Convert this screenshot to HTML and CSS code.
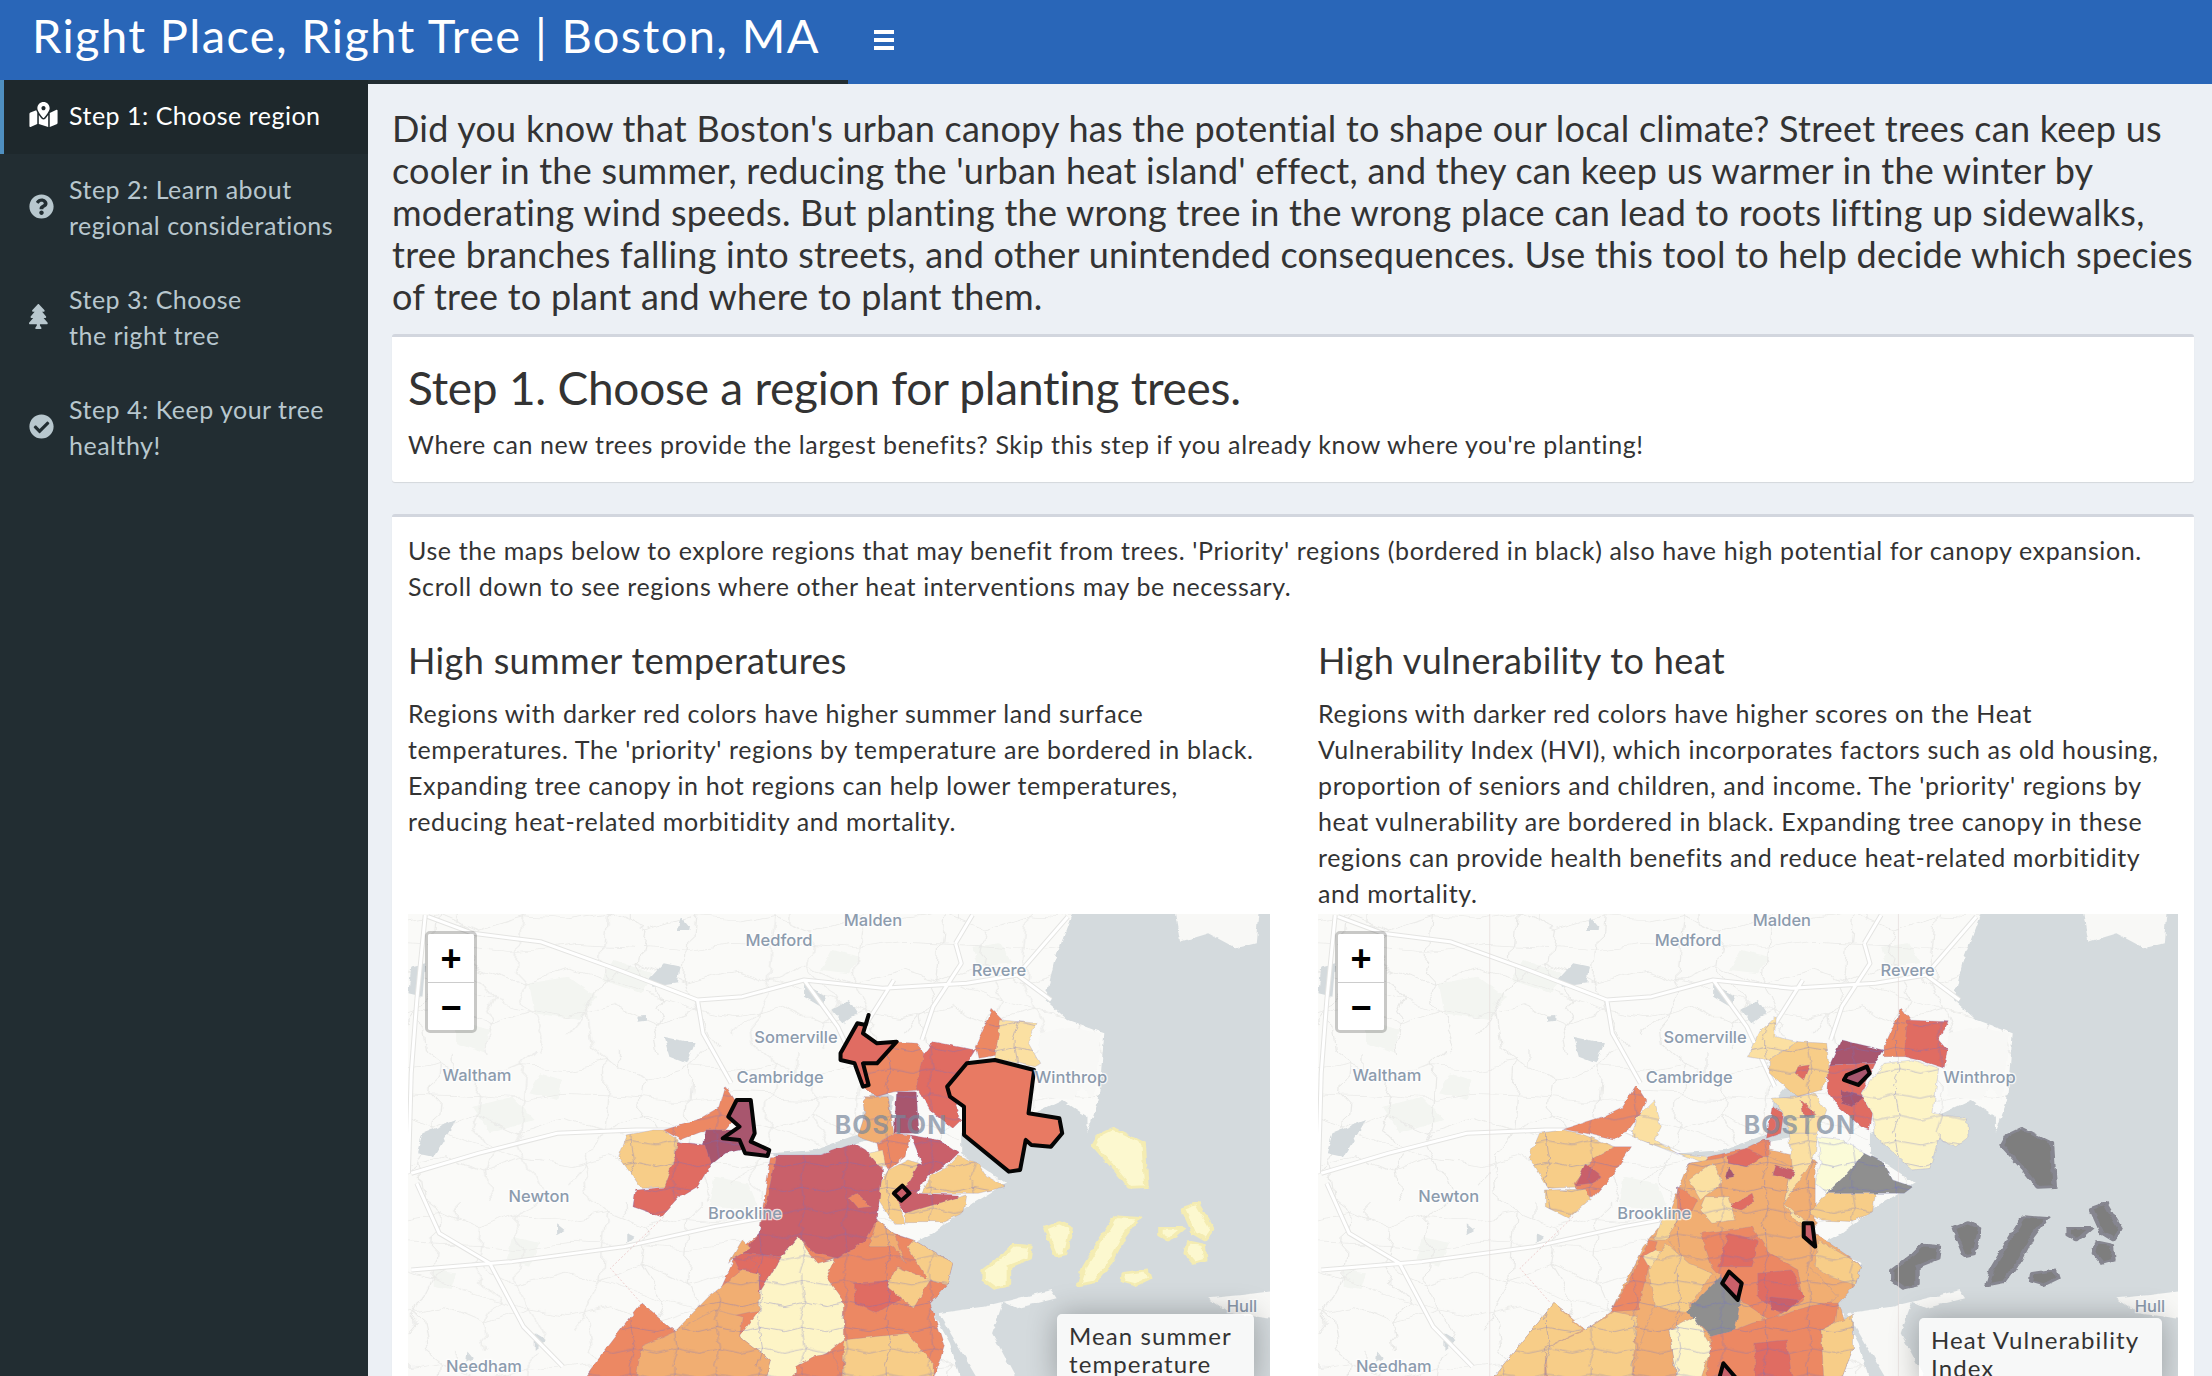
FILE: index.html
```html
<!DOCTYPE html>
<html lang="en">
<head>
<meta charset="utf-8">
<title>Right Place, Right Tree | Boston, MA</title>
<link rel="stylesheet" href="styles.css">
</head>
<body>
<svg class="defs" width="0" height="0" aria-hidden="true">
  <defs>
    <filter id="wobble" filterUnits="userSpaceOnUse" x="0" y="0" width="1600" height="1500">
      <feTurbulence type="fractalNoise" baseFrequency=".05" numOctaves="2" seed="4"/>
      <feDisplacementMap in="SourceGraphic" scale="10" xChannelSelector="R" yChannelSelector="G"/>
    </filter>
    <filter id="wobble-big" filterUnits="userSpaceOnUse" x="0" y="0" width="1600" height="1500">
      <feTurbulence type="fractalNoise" baseFrequency=".012" numOctaves="3" seed="9"/>
      <feDisplacementMap in="SourceGraphic" scale="50" xChannelSelector="R" yChannelSelector="G"/>
    </filter>
    <pattern id="roads" patternUnits="userSpaceOnUse" width="300" height="450">
      <path class="road-tile" d="M0 60L70 40L140 90L220 50L300 60M0 210L60 240L130 190L210 250L300 210M0 350L80 320L150 370L230 330L300 350M40 0L70 40L60 240L30 340L40 450M140 90L130 190L170 300L150 370L160 450M220 50L250 0M220 50L210 250L230 330L260 450M170 300L230 330M60 240L170 300M100 0L100 65M0 130L135 140L215 150L300 130M30 340L0 400"/>
    </pattern>
    <pattern id="mesh" patternUnits="userSpaceOnUse" width="76" height="140">
      <path class="mesh-tile" d="M0 35L32 22L76 35M0 100L38 86L76 100M32 0L32 22L38 86L28 140"/>
    </pattern>
    <g id="basemap">
      <rect x="0" y="0" width="1600" height="1800" class="land"/>
      <g class="park wob">
        <path d="M230 250l70-20 50 60-30 70-80-20zM130 620l70-30 40 70-80 40zM60 1110l40 10-10 50-30-10zM1300 240l60 20 20 70-80 10zM560 830l60 20 20 80-90-10zM200 1010l50 20-20 70-40-20zM1020 140l50-10 20 60-60 10zM100 360l60 30-10 70-50-30zM380 180l70 40-20 60-70-40zM250 520l40 20-10 60-50-20zM770 150l50 20-20 50-50-10z"/>
      </g>
      <rect x="0" y="0" width="1600" height="1500" fill="url(#roads)" class="wob-big"/>
      <g class="water wob">
        <path d="M1200 30L1570 30L1570 1500L1010 1500L980 1330L950 1240L940 1200L985 1090L905 1040L950 1000L1020 910L1080 850L1000 760L1000 700L1130 640L1180 600L1225 650L1225 700L1245 600L1255 400L1190 360L1150 300L1165 190Z"/>
        <path d="M660 760L740 750L820 700L830 600L850 560L880 590L870 710L810 730L750 765L670 770Z"/>
        <path d="M800 300L815 340L790 370L770 330ZM720 250L760 290L750 320L720 290ZM470 190L500 200L495 250L450 260L445 235ZM470 410L525 430L510 490L480 470ZM500 50L520 90L495 90ZM40 700L100 660L60 770L30 760ZM240 1300L260 1320L240 1350ZM280 970L295 990L280 1005ZM405 1000L418 1010L405 1030ZM20 200L45 190L40 290L15 280ZM425 350L440 348L440 362L425 365ZM120 1355L130 1375L118 1385Z"/>
      </g>
      <g class="land-top wob">
        <path d="M1380 30L1530 30L1525 130L1490 145L1440 100L1390 125ZM1440 1195L1500 1185L1570 1170L1570 1260L1480 1240ZM1160 1170L1170 1195L1100 1225L1075 1205L1055 1300L1100 1440L1030 1440L960 1240L1040 1220ZM1190 380L1250 400L1235 600L1215 560L1200 600L1140 590L1135 530L1140 400Z"/>
      </g>
      <g class="major-casing">
        <path id="hw" d="M50 50L130 100L250 125L390 210L530 300L610 290L720 240L860 265L1010 250L1100 225L1190 50M530 300L540 400L590 550M720 240L780 380L830 560M20 820L140 760L280 700L420 690L560 690L660 760M30 850L70 1000L160 1090L220 1280L290 1400M20 1110L200 1085L400 1040L560 980L660 950M990 130L1000 190L950 320L930 420M1100 225L1160 300M1020 45L990 130M880 240L820 400M45 45L30 300L20 520L15 820"/>
      </g>
      <use href="#hw" class="major-inner"/>
      <path class="boundary" d="M470 950L375 1105L430 1210"/>
    </g>
    <g id="islands">
      <path d="M1245 705L1270 685L1325 730L1330 860L1300 862L1270 800L1235 735Z"/>
      <path d="M1040 1110L1080 1060L1095 1035L1125 1040L1122 1075L1085 1100L1085 1155L1060 1165L1040 1140Z"/>
      <path d="M1150 985L1175 968L1195 985L1185 1065L1170 1070L1160 1030Z"/>
      <path d="M1275 950L1315 955L1290 1010L1265 1090L1240 1145L1210 1155L1220 1100L1245 1030Z"/>
      <path d="M1355 985L1395 985L1370 1020L1355 1005Z"/>
      <path d="M1395 925L1420 910L1448 990L1435 1020L1415 1000Z"/>
      <path d="M1405 1025L1432 1035L1435 1080L1415 1090L1400 1060Z"/>
      <path d="M1290 1120L1330 1110L1335 1135L1310 1155L1288 1145Z"/>
    </g>
  </defs>
</svg>

<header class="topbar">
  <div class="brand"><span class="brand-title">Right Place, Right Tree | Boston, MA</span></div>
  <button class="burger" aria-label="Toggle navigation"><span></span><span></span><span></span></button>
</header>

<div class="shell">
  <aside class="sidebar">
    <a class="nav-item active">
      <svg class="nav-icon wide" viewBox="0 0 576 512"><path d="M288 0c-69.59 0-126 56.41-126 126 0 56.26 82.35 158.8 113.9 196.02 6.39 7.54 17.82 7.54 24.2 0C331.65 284.8 414 182.26 414 126 414 56.41 357.59 0 288 0zm0 168c-23.2 0-42-18.8-42-42s18.8-42 42-42 42 18.8 42 42-18.8 42-42 42zM20.12 215.95A32.006 32.006 0 0 0 0 245.66v250.32c0 11.32 11.43 19.06 21.94 14.86L160 448V214.92c-8.84-15.98-16.07-31.54-21.25-46.42L20.12 215.95zM288 359.67c-14.07 0-27.38-6.18-36.51-16.96-19.66-23.2-40.57-49.62-59.49-76.72V448l192 64V266c-18.92 27.09-39.82 53.52-59.49 76.72-9.13 10.77-22.44 16.95-36.51 16.95zm266.06-198.51L416 224v288l139.88-55.95A31.996 31.996 0 0 0 576 426.34V176.02c0-11.32-11.43-19.06-21.94-14.86z"/></svg>
      <span>Step 1: Choose region</span>
    </a>
    <a class="nav-item">
      <svg class="nav-icon" viewBox="0 0 512 512"><path d="M504 256c0 136.997-111.043 248-248 248S8 392.997 8 256C8 119.083 119.043 8 256 8s248 111.083 248 248zM262.655 90c-54.497 0-89.255 22.957-116.549 63.758-3.536 5.286-2.353 12.415 2.715 16.258l34.699 26.31c5.205 3.947 12.621 3.008 16.665-2.122 17.864-22.658 30.113-35.797 57.303-35.797 20.429 0 45.698 13.148 45.698 32.958 0 14.976-12.363 22.667-32.534 33.976C247.128 238.528 216 254.941 216 296v4c0 6.627 5.373 12 12 12h56c6.627 0 12-5.373 12-12v-1.333c0-28.462 83.186-29.647 83.186-106.667 0-58.002-60.165-102-116.531-102zM256 338c-25.365 0-46 20.635-46 46 0 25.364 20.635 46 46 46s46-20.636 46-46c0-25.365-20.635-46-46-46z"/></svg>
      <span>Step 2: Learn about<br>regional considerations</span>
    </a>
    <a class="nav-item">
      <svg class="nav-icon" viewBox="0 0 384 512" preserveAspectRatio="xMinYMid"><path d="M378.31 378.49L298.42 288h30.63c9.01 0 16.98-5 20.78-13.06 3.8-8.04 2.55-17.26-3.28-24.05L268.42 160h28.89c9.1 0 17.3-5.35 20.86-13.61 3.52-8.13 1.86-17.59-4.24-24.08L203.66 4.83c-6.03-6.45-17.28-6.45-23.32 0L70.06 122.31c-6.1 6.49-7.75 15.95-4.24 24.08C69.38 154.65 77.59 160 86.69 160h28.89l-78.14 90.91c-5.81 6.78-7.06 15.99-3.27 24.04C37.97 283 45.93 288 54.95 288h30.63L5.69 378.49c-6 6.79-7.36 16.09-3.56 24.26 3.75 8.05 12 13.25 21.01 13.25H160v24.45l-30.29 48.4c-5.32 10.64 2.42 23.16 14.31 23.16h95.96c11.89 0 19.63-12.52 14.31-23.16L224 440.45V416h136.86c9.01 0 17.26-5.2 21.01-13.25 3.8-8.17 2.44-17.47-3.56-24.26z"/></svg>
      <span>Step 3: Choose<br>the right tree</span>
    </a>
    <a class="nav-item">
      <svg class="nav-icon" viewBox="0 0 512 512"><path d="M504 256c0 136.967-111.033 248-248 248S8 392.967 8 256 119.033 8 256 8s248 111.033 248 248zM227.314 387.314l184-184c6.248-6.248 6.248-16.379 0-22.627l-22.627-22.627c-6.248-6.249-16.379-6.249-22.628 0L216 308.118l-70.059-70.059c-6.248-6.248-16.379-6.248-22.628 0l-22.627 22.627c-6.248 6.248-6.248 16.379 0 22.627l104 104c6.249 6.249 16.379 6.249 22.628.001z"/></svg>
      <span>Step 4: Keep your tree<br>healthy!</span>
    </a>
  </aside>

  <main class="content">
    <p class="intro">Did you know that Boston's urban canopy has the potential to shape our local climate? Street trees can keep us<br>cooler in the summer, reducing the 'urban heat island' effect, and they can keep us warmer in the winter by<br>moderating wind speeds. But planting the wrong tree in the wrong place can lead to roots lifting up sidewalks,<br>tree branches falling into streets, and other unintended consequences. Use this tool to help decide which species<br>of tree to plant and where to plant them.</p>

    <section class="box box-head">
      <h1>Step 1. Choose a region for planting trees.</h1>
      <p class="body-text">Where can new trees provide the largest benefits? Skip this step if you already know where you're planting!</p>
    </section>

    <section class="box box-main">
      <p class="body-text lede">Use the maps below to explore regions that may benefit from trees. 'Priority' regions (bordered in black) also have high potential for canopy expansion.<br>Scroll down to see regions where other heat interventions may be necessary.</p>
      <div class="columns">
        <article class="col">
          <h3>High summer temperatures</h3>
          <p class="body-text desc">Regions with darker red colors have higher summer land surface<br>temperatures. The 'priority' regions by temperature are bordered in black.<br>Expanding tree canopy in hot regions can help lower temperatures,<br>reducing heat-related morbitidity and mortality.</p>
          <div class="map">
            <svg class="map-svg" viewBox="0 0 862 520" preserveAspectRatio="none">
              <defs>
                <mask id="mask-a" class="alpha-mask" maskUnits="userSpaceOnUse" x="0" y="0" width="1600" height="1500"><use href="#tracts-a"/></mask>
              </defs>
              <g transform="translate(-8 -14) scale(.5612 .3333)">
                <use href="#basemap"/>
                <g class="wob">
                  <g id="tracts-a" class="tracts">
                    <path class="t5" d="M660 770L760 765L860 800L850 960L880 1000L915 1020L985 1090L975 1155L945 1210L970 1340L950 1440L325 1440L430 1210L490 1295L560 1210L600 1060L640 1000Z"/>
                    <path class="t3" d="M450 690L405 705L390 770L430 865L475 860L490 770L510 740L470 690Z"/>
                    <path class="t5" d="M580 560L595 600L605 640L580 690L545 690L500 720L470 690L530 660L570 620Z"/>
                    <path class="t8" d="M545 690L610 690L620 745L580 760L550 800L540 740Z"/>
                    <path class="t6" d="M495 725L545 735L555 790L530 860L500 890L470 860L490 770Z"/>
                    <path class="t6" d="M420 870L480 860L500 885L465 950L415 920Z"/>
                    <path class="t5" d="M880 425L920 430L935 460L930 570L880 575L850 590L825 560L825 490Z"/>
                    <path class="t8" d="M885 575L920 575L925 700L880 700Z"/>
                    <path class="t6" d="M950 425L1025 450L1010 490L975 555L990 620L1000 660L985 685L945 630L920 560L935 460Z"/>
                    <path class="t5" d="M1055 325L1075 360L1065 465L1030 475L1025 440Z"/>
                    <path class="t2" d="M1070 360L1135 370L1120 430L1140 490L1130 500L1060 475Z"/>
                    <path class="t4" d="M825 590L870 590L880 700L850 730L815 710L830 640Z"/>
                    <path class="t5" d="M850 730L880 700L910 705L900 770L870 810L855 770Z"/>
                    <path class="t7" d="M910 705L960 720L995 760L970 800L940 830L920 880L995 885L995 905L900 940L880 900L905 800L930 790Z"/>
                    <path class="t2" d="M835 760L860 750L865 795L850 800Z"/>
                    <path class="t3" d="M995 765L1030 790L1045 830L1078 860L1030 880L930 880L945 830L975 800Z"/>
                    <path class="t3" d="M900 940L1010 885L1005 935L970 965L900 965Z"/>
                    <path class="t3" d="M905 780L925 790L905 850L885 900L900 970L880 970L845 880L870 810Z"/>
                    <path class="t7" d="M670 765L750 765L810 730L830 750L860 810L850 960L830 1020L780 1075L740 1060L710 1010L680 1070L610 1060L640 1000L660 850Z"/>
                    <path class="t6" d="M610 1060L680 1070L640 1180L620 1190L610 1100Z"/>
                    <path class="t6" d="M595 1075L610 1060L635 1090L625 1110L605 1110Z"/>
                    <path class="t4" d="M610 1020L625 1045L595 1075L585 1090Z"/>
                    <path class="t5" d="M800 895L815 880L840 920L815 925Z"/>
                    <path class="t1" d="M710 1010L730 1060L745 1090L775 1075L760 1130L790 1200L790 1320L760 1360L725 1390L690 1440L650 1440L660 1380L605 1310L640 1230L640 1180L680 1070Z"/>
                    <path class="t6" d="M810 1150L880 1140L890 1200L850 1240L810 1210Z"/>
                    <path class="t4" d="M850 960L880 1000L900 1090L880 1040L835 1040Z"/>
                    <path class="t3" d="M915 1020L985 1090L975 1155L940 1140L905 1040Z"/>
                    <path class="t3" d="M885 1100L945 1140L915 1225L890 1190L868 1160Z"/>
                    <path class="t3" d="M790 1320L905 1300L950 1390L950 1440L790 1440Z"/>
                    <path class="t4" d="M610 1110L640 1120L640 1230L560 1260L490 1295L550 1190Z"/>
                    <path class="t4" d="M490 1295L560 1230L610 1250L605 1310L660 1380L650 1440L420 1440L430 1340Z"/>
                    <path class="t5" d="M705 1400L735 1370L770 1360L790 1440L705 1440Z"/>
                  </g>
                  <rect class="mesh-rect" x="0" y="0" width="1600" height="1500" mask="url(#mask-a)"/>
                </g>
                <g class="priority">
                  <path class="t8" d="M600 600L625 600L632 700L625 725L658 750L655 768L615 760L605 720L575 715L605 680L585 650Z"/>
                  <path class="t6" d="M835 345L830 375L815 370L785 460L785 480L810 490L825 560L835 555L825 490L850 490L885 425L850 430L825 400Z"/>
                  <path class="t5b" d="M1010 490L1060 480L1130 510L1120 640L1175 655L1180 700L1160 740L1125 735L1115 720L1105 810L1085 815L1005 705L1005 620L980 590L975 560Z"/>
                  <path class="t7" d="M895 857L908 880L893 902L880 880Z"/>
                </g>
                <use href="#islands" class="isl-pale wob"/>
              </g>
              <g class="labels">
                <text x="465" y="8">Malden</text><text x="371" y="28">Medford</text><text x="591" y="58">Revere</text><text x="388" y="125">Somerville</text><text x="69" y="163">Waltham</text><text x="372" y="165">Cambridge</text><text x="663" y="165">Winthrop</text><text x="131" y="284">Newton</text><text x="337" y="301">Brookline</text><text x="834" y="394">Hull</text><text x="76" y="454">Needham</text>
                <text class="city" x="483" y="213">BOSTON</text>
              </g>
            </svg>
            <div class="zoom"><a class="zoom-btn">+</a><a class="zoom-btn">&#8722;</a></div>
            <div class="legend legend-a">Mean summer<br>temperature</div>
          </div>
        </article>

        <article class="col">
          <h3>High vulnerability to heat</h3>
          <p class="body-text desc">Regions with darker red colors have higher scores on the Heat<br>Vulnerability Index (HVI), which incorporates factors such as old housing,<br>proportion of seniors and children, and income. The 'priority' regions by<br>heat vulnerability are bordered in black. Expanding tree canopy in these<br>regions can provide health benefits and reduce heat-related morbitidity<br>and mortality.</p>
          <div class="map">
            <svg class="map-svg" viewBox="0 0 862 520" preserveAspectRatio="none">
              <defs>
                <mask id="mask-b" class="alpha-mask" maskUnits="userSpaceOnUse" x="0" y="0" width="1600" height="1500"><use href="#tracts-b"/></mask>
              </defs>
              <g transform="translate(-8 -14) scale(.5612 .3333)">
                <use href="#basemap"/>
                <use href="#islands" class="isl-grey wob"/>
              </g>
              <g transform="translate(-8 -14) scale(.5754 .3333)">
                <path class="seam" d="M313 42V1440M1025 42V1440"/>
                <g class="wob">
                  <g id="tracts-b" class="tracts">
                    <path class="t4" d="M660 790L800 750L880 780L880 1000L960 1095L950 1155L920 1210L945 1350L925 1440L315 1440L425 1210L480 1290L525 1235L580 1040L620 960Z"/>
                    <path class="t3" d="M440 690L400 700L382 770L415 865L478 860L490 800L530 740L470 700Z"/>
                    <path class="t5" d="M568 555L585 600L575 640L555 690L530 720L480 700L440 688L510 650L545 620Z"/>
                    <path class="t2" d="M600 600L612 680L600 720L640 760L695 770L690 790L640 760L560 710L570 650Z"/>
                    <path class="t5" d="M530 740L560 740L530 820L495 890L470 890L460 850L490 780Z"/>
                    <path class="t7" d="M480 790L510 830L490 850L462 855Z"/>
                    <path class="t3" d="M410 870L480 868L490 895L450 955L410 920Z"/>
                    <path class="t2" d="M810 350L785 390L762 470L800 480L850 425L810 410Z"/>
                    <path class="t3" d="M850 425L900 430L905 520L890 570L850 590L800 520L800 480Z"/>
                    <path class="t6" d="M850 500L870 495L860 540L845 520Z"/>
                    <path class="t2" d="M805 595L850 590L880 580L900 630L885 700L835 700L825 640Z"/>
                    <path class="t6" d="M855 600L880 640L860 650Z"/>
                    <path class="t8" d="M925 420L1000 450L985 490L905 495Z"/>
                    <path class="t6" d="M905 495L985 490L960 580L980 640L975 690L960 680L920 620L900 570Z"/>
                    <path class="t8" d="M925 570L965 590L945 620L925 610Z"/>
                    <path class="t5" d="M1030 325L1045 360L1035 470L1000 470L1000 440Z"/>
                    <path class="t6" d="M1040 360L1110 365L1095 420L1110 450L1105 505L1060 480L1035 470Z"/>
                    <path class="t1" d="M1000 490L1050 480L1095 505L1085 640L1145 655L1148 710L1125 740L1095 715L1080 805L1050 810L985 710L980 640L960 580Z"/>
                    <path class="t6" d="M805 620L825 640L820 700L795 715Z"/>
                    <path class="t5" d="M790 720L760 745L695 770L690 790L730 770L800 770L800 720Z"/>
                    <path class="t0" d="M885 710L930 720L965 760L940 830L900 880L880 850L890 790Z"/>
                    <path class="t2" d="M835 700L885 700L880 760L870 790L825 910L860 960L875 965L850 970L825 910L840 800Z"/>
                    <path class="t3" d="M900 880L985 880L980 935L945 965L890 960L870 940Z"/>
                    <path class="t4" d="M660 790L730 770L800 770L840 800L825 910L830 960L880 1000L880 1040L870 1100L920 1190L890 1230L880 1290L740 1200L700 1120L650 1090L620 1000L640 960Z"/>
                    <path class="t5" d="M640 860L675 900L660 950L640 940Z"/>
                    <path class="t2" d="M660 840L700 790L720 850L680 900Z"/>
                    <path class="t2" d="M690 890L730 890L740 960L700 970L680 930Z"/>
                    <path class="t8" d="M730 800L740 830L725 835Z"/>
                    <path class="t7" d="M810 795L845 815L838 838L805 825Z"/>
                    <path class="t6" d="M730 920L770 880L775 905L750 930Z"/>
                    <path class="t6" d="M730 770L760 745L790 770L760 800L730 790Z"/>
                    <path class="t5" d="M680 1000L770 980L800 1060L850 1110L860 1200L800 1260L750 1200L700 1100Z"/>
                    <path class="t6" d="M730 1000L780 1020L770 1100L710 1100Z"/>
                    <path class="t6" d="M780 1120L840 1110L860 1190L820 1240L780 1190Z"/>
                    <path class="t7" d="M800 1190L850 1200L830 1235L805 1230Z"/>
                    <path class="t3" d="M885 1020L960 1095L950 1155L905 1130L880 1100Z"/>
                    <path class="t5" d="M590 1020L605 1025L590 1100L570 1230L525 1235L560 1130Z"/>
                    <path class="t3b" d="M615 950L640 960L620 1020L600 1020Z"/>
                    <path class="t2" d="M600 1050L620 1060L615 1110L590 1100L580 1070Z"/>
                    <path class="t3" d="M620 1030L660 1090L700 1120L655 1235L600 1220L590 1110Z"/>
                    <path class="gr" d="M715 1130L750 1200L740 1290L700 1310L655 1235Z"/>
                    <path class="t1" d="M670 1250L700 1340L680 1440L640 1440L625 1290Z"/>
                    <path class="t3" d="M425 1210L475 1290L410 1345L410 1440L315 1440Z"/>
                    <path class="t3" d="M480 1290L530 1235L570 1250L560 1440L415 1440L410 1345Z"/>
                    <path class="t4" d="M600 1220L650 1240L625 1290L640 1440L560 1440L575 1330Z"/>
                    <path class="t5" d="M700 1310L740 1290L770 1270L890 1210L920 1210L915 1270L890 1290L900 1440L690 1440Z"/>
                    <path class="t3" d="M890 1290L945 1245L945 1350L925 1440L895 1440Z"/>
                    <path class="t6" d="M775 1330L830 1320L840 1440L775 1440Z"/>
                    <path class="gr" d="M965 760L1000 790L1015 840L1050 860L1035 880L900 880L930 830Z"/>
                  </g>
                  <rect class="mesh-rect" x="0" y="0" width="1600" height="1500" mask="url(#mask-b)"/>
                </g>
                <g class="priority">
                  <path class="t8" d="M935 525L970 500L975 520L955 555L930 540Z"/>
                  <path class="t7" d="M860 970L875 970L880 1040L860 1010Z"/>
                  <path class="t7" d="M730 1115L752 1150L745 1200L718 1150Z"/>
                  <path class="t7" d="M720 1390L745 1440L712 1440Z"/>
                </g>
              </g>
              <g class="labels">
                <text x="465" y="8">Malden</text><text x="371" y="28">Medford</text><text x="591" y="58">Revere</text><text x="388" y="125">Somerville</text><text x="69" y="163">Waltham</text><text x="372" y="165">Cambridge</text><text x="663" y="165">Winthrop</text><text x="131" y="284">Newton</text><text x="337" y="301">Brookline</text><text x="834" y="394">Hull</text><text x="76" y="454">Needham</text>
                <text class="city" x="483" y="213">BOSTON</text>
              </g>
            </svg>
            <div class="zoom"><a class="zoom-btn">+</a><a class="zoom-btn">&#8722;</a></div>
            <div class="legend legend-b">Heat Vulnerability<br>Index</div>
          </div>
        </article>
      </div>
    </section>
  </main>
</div>
</body>
</html>
```

FILE: styles.css
```css
* { box-sizing: border-box; }
html, body { margin: 0; height: 1376px; overflow: hidden; }
body { font-family: "Lato", "Liberation Sans", sans-serif; background: #ecf0f5; color: #333; }
.defs { display: block; height: 0; }

.topbar { display: flex; height: 84px; background: #2966b8; }
.brand { width: 848px; height: 84px; padding-left: 32px; border-bottom: 4px solid #222d32; color: #fff; }
.brand-title { display: block; font-size: 47px; line-height: 70px; white-space: nowrap; letter-spacing: 1.36px; }
.burger { display: flex; flex-direction: column; justify-content: center; gap: 4px; width: 20px; margin-left: 26px; padding: 0 0 4px; border: 0; background: none; }
.burger span { display: block; height: 4px; background: #fff; }

.shell { display: flex; height: 1292px; }
.sidebar { flex: 0 0 368px; margin-top: -4px; background: #222d32; position: relative; }
.nav-item { display: flex; align-items: center; height: 110px; padding: 0 8px 5px 29px; color: #b8c7ce; font-size: 25px; line-height: 36px; letter-spacing: .5px; white-space: nowrap; }
.nav-item.active { height: 74px; padding-left: 25px; border-left: 4px solid #4f8fc0; background: #1e282c; color: #fff; }
.nav-icon { flex: 0 0 25px; width: 25px; height: 25px; margin-right: 15px; fill: currentColor; }
.nav-icon.wide { flex-basis: 29px; width: 29px; margin-right: 11px; }

.content { flex: 1; padding: 23px 18px 0 24px; overflow: hidden; }
.intro { margin: 0 0 17px; font-size: 36px; line-height: 42px; white-space: nowrap; letter-spacing: .25px; color: #333; }
.box { background: #fff; border-top: 3px solid #d2d6de; border-radius: 3px; box-shadow: 0 1px 1px rgba(0,0,0,.1); padding: 0 16px; }
.box-head { height: 148px; margin-bottom: 32px; }
h1 { margin: 0; padding-top: 24px; font-size: 46px; line-height: 54px; font-weight: 400; letter-spacing: -.25px; white-space: nowrap; }
.body-text { margin: 0; font-size: 25px; line-height: 36px; white-space: nowrap; letter-spacing: .62px; }
.box-head .body-text { margin-top: 11px; }
.lede { padding-top: 15px; }
.columns { display: grid; grid-template-columns: 862px 860px; gap: 48px; margin-top: 34px; }
h3 { margin: 0; font-size: 36px; line-height: 44px; font-weight: 400; letter-spacing: .35px; white-space: nowrap; }
.desc { margin-top: 13px; height: 216px; }
.col { min-width: 0; }

.map { position: relative; height: 520px; margin-top: 3px; overflow: hidden; background: #fafaf8; }
.map-svg { display: block; width: 100%; height: 100%; }
.land { fill: #fafaf8; }
.park { fill: #f3f5f1; }
.water { fill: #d4dadd; }
.land-top { fill: #f8f8f6; }
.wob { filter: url(#wobble); }
.wob-big { filter: url(#wobble-big); }
.road-tile { fill: none; stroke: #e9e9e7; stroke-width: 2.2; }
.mesh-tile { fill: none; stroke: #6f70c8; stroke-opacity: .5; stroke-width: 1.6; }
.mesh-rect { fill: url(#mesh); }
.alpha-mask { mask-type: alpha; }
#hw { vector-effect: non-scaling-stroke; }
.major-casing { fill: none; stroke: #e4e4e2; stroke-width: 5; stroke-linejoin: round; }
.major-inner { fill: none; stroke: #fff; stroke-width: 3; stroke-linejoin: round; }
.boundary { fill: none; stroke: #e7b9b9; stroke-width: 1.5; stroke-dasharray: 5 5; }
.seam { fill: none; stroke: #e6dcdb; stroke-width: 1.6; }
.tracts path { stroke: #7d7fc4; stroke-width: 1; stroke-opacity: .5; }
.t0 { fill: #fbfbd8; }
.t1 { fill: #fdf4c6; }
.t2 { fill: #fbe0a2; }
.t3 { fill: #f7cd88; }
.t3b { fill: #f8d692; }
.t4 { fill: #f1ae72; }
.t5 { fill: #ec8863; }
.t5b { fill: #e87a63; }
.t6 { fill: #e06c62; }
.t7 { fill: #c9606a; }
.t8 { fill: #a8566e; }
.gr { fill: #8f8f8f; }
.priority path { stroke: #050505; stroke-width: 4; stroke-linejoin: round; vector-effect: non-scaling-stroke; }
.isl-pale { fill: #fcf8cf; stroke: #f4ecb2; stroke-width: 8; stroke-linejoin: round; }
.isl-grey { fill: #7e7e7e; stroke: #868690; stroke-width: 8; stroke-linejoin: round; }

.labels { transform: translateY(-2px); }
.labels text { font-family: "Inter", "Liberation Sans", sans-serif; font-size: 16.5px; font-weight: 500; fill: #8c9bad; text-anchor: middle; dominant-baseline: central; stroke: rgba(255,255,255,.75); stroke-width: 2.5px; paint-order: stroke; }
.labels .city { font-size: 25px; font-weight: 700; letter-spacing: 1px; fill: rgba(120,135,155,.7); stroke: none; }

.zoom { position: absolute; left: 17px; top: 17px; width: 52px; border: 3px solid rgba(0,0,0,.2); border-radius: 5px; background-clip: padding-box; overflow: hidden; }
.zoom-btn { display: block; height: 48px; background: #fff; color: #000; font: 700 36px/49px "Liberation Sans", sans-serif; text-align: center; }
.zoom-btn + .zoom-btn { border-top: 1px solid #ccc; }

.legend { position: absolute; padding: 8px 12px 8px; background: rgba(255,255,255,.8); border-radius: 5px; box-shadow: 0 0 30px rgba(0,0,0,.28); color: #333; font-size: 24px; line-height: 28px; letter-spacing: 1.1px; white-space: nowrap; }
.legend-a { left: 649px; top: 400px; width: 197px; }
.legend-b { left: 601px; top: 404px; width: 243px; }
```
